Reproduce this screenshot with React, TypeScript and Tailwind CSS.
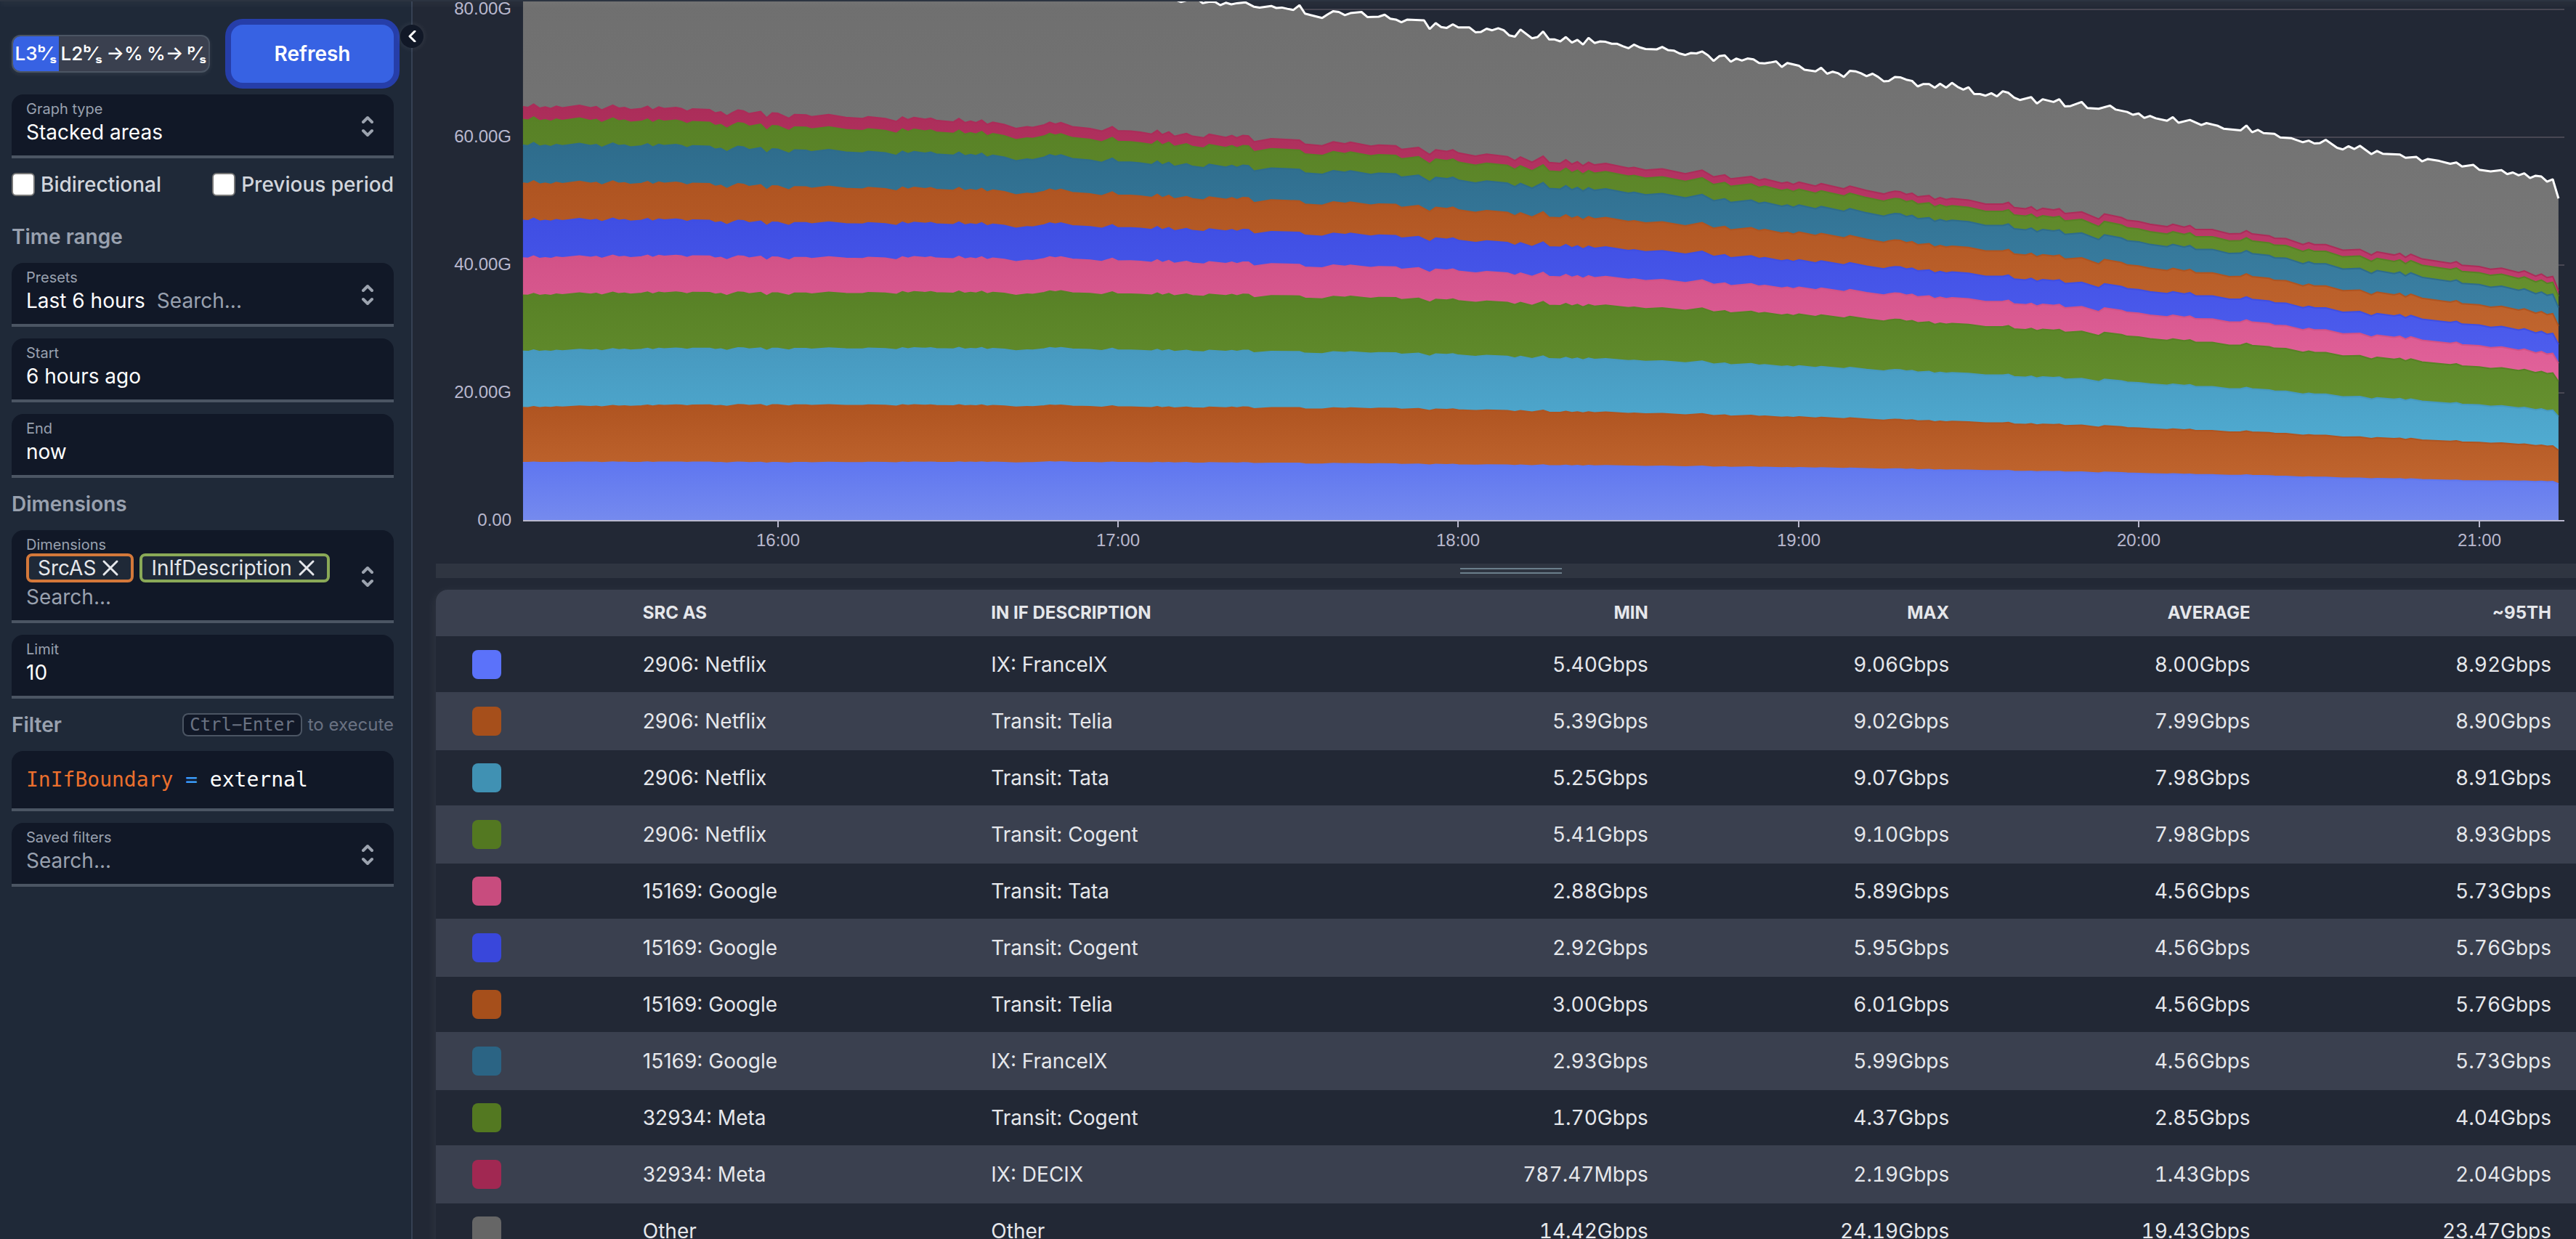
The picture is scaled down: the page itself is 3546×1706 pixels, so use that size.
import React, { useState } from "react";

type Pt = [number, number];

/* Plot geometry, in chart units */
const LEFT = 720;
const RIGHT = 3522;
const BASE = 716;

const scale = (pts: Pt[], ox: number, sx: number, sy: number): Pt[] =>
  pts.map(([x, y]) => [ox + x / sx, y / sy]);

const total: Pt[] = [
  [720, -60],
  [1500, -12],
  ...scale(
    [
      [0, -5],[30, 0],[40, 5],[55, 0],[80, 1],[87, 8],[102, 4],[114, 5],[125, 13],[137, 7],[149, 11],[161, 8],[180, 6],[198, 17],[210, 19],[235, 15],[246, 20],[258, 19],[270, 22],[283, 25],[296, 13],[308, 34],[320, 38],[345, 45],[357, 36],[369, 28],[381, 30],[394, 38],[406, 33],[430, 30],[443, 43],[467, 42],[480, 37],[492, 47],[504, 49],[516, 56],[529, 49],[565, 51],[577, 73],[590, 58],[602, 68],[614, 70],[627, 61],[639, 69],[663, 69],[676, 81],[688, 80],[700, 72],[712, 76],[725, 71],[737, 76],[749, 89],[761, 92],[773, 74],[798, 96],[810, 93],[822, 79],[835, 99],[847, 99],[859, 104],[871, 93],[884, 107],[896, 100],[908, 112],[920, 95],[933, 108],[945, 104],[957, 105],[970, 110],[982, 110],[994, 116],[1006, 121],[1018, 112],[1031, 119],[1043, 123],[1067, 124],[1079, 118],[1092, 126],[1104, 127],[1116, 134],[1129, 138],[1141, 133],[1153, 134],[1165, 129],[1178, 139],[1190, 153],[1202, 141],[1214, 139],[1227, 155],[1239, 147],[1251, 152],[1263, 147],[1276, 149],[1288, 158],[1300, 159],[1312, 157],[1325, 154],[1337, 168],[1349, 158],[1374, 165],[1386, 175],[1410, 179],[1422, 170],[1435, 185],[1447, 180],[1459, 184],[1471, 193],[1484, 178],[1496, 179],[1508, 184],[1520, 191],[1533, 185],[1545, 193],[1557, 204],
    ],
    1600, 1.568, 1.823,
  ),
  ...scale(
    [
      [0, 203],[14, 193],[26, 194],[40, 200],[53, 203],[66, 217],[79, 211],[92, 211],[105, 220],[117, 210],[131, 220],[144, 208],[157, 218],[170, 225],[182, 219],[195, 236],[208, 236],[221, 240],[234, 234],[247, 242],[260, 229],[273, 233],[286, 245],[299, 251],[325, 244],[338, 260],[351, 249],[376, 256],[389, 249],[402, 267],[415, 266],[440, 256],[453, 271],[479, 273],[505, 265],[518, 275],[544, 281],[557, 288],[570, 285],[583, 296],[596, 291],[609, 297],[635, 303],[648, 294],[661, 308],[687, 301],[713, 314],[725, 309],[751, 316],[764, 323],[803, 327],[816, 315],[829, 332],[842, 326],[855, 334],[880, 336],[893, 345],[919, 347],[945, 357],[958, 353],[971, 360],[984, 359],[997, 351],[1023, 371],[1036, 375],[1049, 367],[1062, 374],[1075, 366],[1101, 387],[1114, 379],[1127, 386],[1166, 388],[1179, 396],[1204, 394],[1217, 405],[1230, 399],[1256, 404],[1281, 411],[1295, 408],[1308, 418],[1334, 414],[1347, 426],[1373, 430],[1398, 427],[1411, 437],[1424, 433],[1437, 440],[1450, 435],[1463, 447],[1476, 441],[1489, 443],[1502, 456],[1515, 450],[1528, 498],
    ],
    2600, 1.6575, 1.823,
  ),
];

const named: Pt[] = [
  ...scale(
    [
      [188, 288],[199, 290],[211, 281],[224, 292],[236, 289],[248, 293],[260, 287],[273, 291],[310, 284],[334, 291],[346, 288],[358, 297],[382, 284],[395, 292],[407, 290],[420, 296],[444, 293],[457, 287],[468, 297],[481, 289],[493, 293],[518, 290],[530, 293],[542, 300],[554, 294],[591, 296],[603, 305],[615, 302],[628, 313],[640, 304],[652, 297],[664, 299],[676, 307],[701, 301],[714, 318],[726, 305],[738, 306],[762, 319],[774, 309],[799, 310],[811, 315],[848, 309],[885, 317],[921, 320],[933, 315],[970, 320],[994, 328],[1007, 316],[1019, 323],[1032, 317],[1056, 322],[1068, 319],[1080, 325],[1117, 329],[1129, 320],[1142, 331],[1154, 327],[1166, 331],[1178, 324],[1190, 336],[1202, 330],[1227, 336],[1252, 347],[1276, 342],[1288, 344],[1313, 337],[1325, 330],[1337, 335],[1349, 331],[1374, 342],[1412, 347],[1437, 354],[1460, 342],[1472, 353],[1500, 354],[1521, 357],[1545, 362],[1557, 352],
    ],
    600, 1.568, 1.96,
  ),
  ...scale(
    [
      [0, 338],[14, 331],[26, 342],[52, 335],[65, 342],[89, 346],[101, 337],[137, 345],[150, 340],[161, 346],[174, 340],[186, 341],[198, 356],[235, 348],[296, 352],[308, 362],[345, 366],[369, 356],[394, 361],[406, 357],[450, 367],[467, 364],[504, 366],[516, 375],[553, 370],[577, 388],[590, 376],[614, 380],[627, 376],[639, 384],[676, 392],[700, 387],[745, 393],[761, 403],[773, 394],[798, 407],[822, 392],[835, 408],[859, 410],[871, 401],[884, 412],[896, 406],[908, 416],[920, 407],[933, 414],[957, 410],[1006, 422],[1018, 420],[1043, 427],[1079, 424],[1129, 436],[1165, 427],[1190, 444],[1214, 439],[1227, 449],[1271, 443],[1288, 452],[1300, 449],[1337, 460],[1349, 457],[1362, 463],[1374, 457],[1410, 467],[1422, 461],[1471, 474],[1484, 467],[1520, 478],[1557, 487],
    ],
    1600, 1.568, 1.823,
  ),
  ...scale(
    [
      [0, 483],[14, 480],[26, 481],[40, 488],[53, 485],[66, 494],[92, 491],[105, 501],[117, 496],[131, 501],[144, 498],[182, 502],[221, 512],[260, 512],[273, 508],[286, 521],[312, 524],[325, 519],[338, 529],[351, 523],[376, 527],[389, 524],[402, 536],[440, 532],[479, 550],[492, 537],[531, 546],[544, 553],[570, 556],[596, 563],[635, 569],[648, 563],[674, 570],[687, 566],[700, 576],[738, 576],[777, 587],[803, 586],[816, 579],[829, 587],[868, 592],[880, 598],[906, 599],[945, 614],[958, 609],[971, 614],[997, 614],[1036, 628],[1075, 626],[1101, 640],[1114, 632],[1153, 640],[1166, 636],[1179, 646],[1191, 638],[1217, 650],[1281, 661],[1295, 657],[1308, 666],[1347, 669],[1373, 676],[1398, 673],[1437, 684],[1450, 680],[1476, 693],[1489, 688],[1502, 697],[1515, 694],[1528, 730],
    ],
    2600, 1.6575, 1.823,
  ),
];

/* Share of the named traffic below the top of each layer, at a few instants */
const shareX = [720, 1071, 1600, 2007, 2477, 2944, 3413, 3522];
const shares: number[][] = [
  [0.139, 0.141, 0.148, 0.15, 0.155, 0.156, 0.154, 0.158],
  [0.272, 0.283, 0.291, 0.3, 0.305, 0.308, 0.306, 0.304],
  [0.408, 0.422, 0.438, 0.449, 0.456, 0.46, 0.454, 0.451],
  [0.544, 0.558, 0.583, 0.597, 0.609, 0.613, 0.604, 0.604],
  [0.634, 0.646, 0.668, 0.678, 0.689, 0.693, 0.688, 0.684],
  [0.725, 0.732, 0.753, 0.762, 0.77, 0.772, 0.769, 0.766],
  [0.815, 0.821, 0.836, 0.845, 0.852, 0.851, 0.849, 0.847],
  [0.907, 0.912, 0.921, 0.926, 0.932, 0.932, 0.929, 0.927],
  [0.969, 0.969, 0.973, 0.975, 0.979, 0.975, 0.976, 0.976],
];

const interpolate = (xs: number[], ys: number[], x: number) => {
  let i = 1;
  while (i < xs.length - 1 && xs[i] < x) i++;
  const t = Math.min(1, Math.max(0, (x - xs[i - 1]) / (xs[i] - xs[i - 1])));
  return ys[i - 1] + (ys[i] - ys[i - 1]) * t;
};

const layers: Pt[][] = [
  ...shares.map((row) =>
    named.map(([x, y]): Pt => [x, BASE - (BASE - y) * interpolate(shareX, row, x)]),
  ),
  named,
  total,
];

const gradients: [string, string][] = [
  ["#5f76f0", "#758aee"],
  ["#af5421", "#c1662f"],
  ["#4799bf", "#50acd2"],
  ["#588126", "#66912f"],
  ["#d25287", "#e2629b"],
  ["#3f4ee3", "#4e5eee"],
  ["#af5421", "#c1662f"],
  ["#2e6c8c", "#3c82a6"],
  ["#588126", "#66912f"],
  ["#ab2d59", "#c03e70"],
  ["#6e6e6e", "#787878"],
];

const points = (p: Pt[]) => p.map(([x, y]) => `${x.toFixed(1)},${y.toFixed(1)}`).join(" ");

const hours: [string, number][] = [
  ["16:00", 1071], ["17:00", 1539], ["18:00", 2007], ["19:00", 2476], ["20:00", 2944], ["21:00", 3413],
];
const levels: [string, number][] = [
  ["80.00G", 12], ["60.00G", 188], ["40.00G", 364], ["20.00G", 540], ["0.00", 716],
];

function Chart() {
  return (
    <svg
      viewBox="600 0 2960 776"
      preserveAspectRatio="none"
      className="block h-[776px] w-full font-['Liberation_Sans',sans-serif] text-2xl"
      role="img"
      aria-label="Traffic, stacked areas"
    >
      <defs>
        {gradients.map(([a, b], i) => (
          <linearGradient key={i} id={`area${i}`} x1="0" y1="0" x2="0" y2="1">
            <stop offset="0" stopColor={a} />
            <stop offset="1" stopColor={b} />
          </linearGradient>
        ))}
      </defs>
      {levels.slice(0, 4).map(([label, y]) => (
        <line key={label} x1={LEFT} x2="3530" y1={y + 1} y2={y + 1} stroke="#484753" strokeWidth="2" />
      ))}
      {layers.map((top, i) => {
        const below = i ? layers[i - 1] : ([[LEFT, BASE], [RIGHT, BASE]] as Pt[]);
        return (
          <polygon key={i} points={points([...top, ...[...below].reverse()])} fill={`url(#area${i})`} />
        );
      })}
      {layers.slice(0, 10).map((top, i) => (
        <polyline key={i} points={points(top)} fill="none" stroke={gradients[i][0]} strokeWidth="2" />
      ))}
      <polyline points={points(total)} fill="none" stroke="#fff" strokeWidth="3" strokeLinejoin="bevel" />
      <line x1={LEFT} x2="3530" y1="717" y2="717" stroke="#b9b8ce" strokeWidth="2" />
      {hours.map(([label, x]) => (
        <g key={label}>
          <line x1={x} x2={x} y1="717" y2="726" stroke="#b9b8ce" strokeWidth="2" />
          <text x={x} y="752" textAnchor="middle" fill="#b9b8ce">{label}</text>
        </g>
      ))}
      {levels.map(([label, y]) => (
        <text key={label} x="704" y={y + 8} textAnchor="end" fill="#b9b8ce">{label}</text>
      ))}
    </svg>
  );
}

const rows: [string, string, string, string, string, string, string][] = [
  ["bg-[#5b72fa]", "2906: Netflix", "IX: FranceIX", "5.40Gbps", "9.06Gbps", "8.00Gbps", "8.92Gbps"],
  ["bg-[#a64f1b]", "2906: Netflix", "Transit: Telia", "5.39Gbps", "9.02Gbps", "7.99Gbps", "8.90Gbps"],
  ["bg-[#4091b3]", "2906: Netflix", "Transit: Tata", "5.25Gbps", "9.07Gbps", "7.98Gbps", "8.91Gbps"],
  ["bg-[#537821]", "2906: Netflix", "Transit: Cogent", "5.41Gbps", "9.10Gbps", "7.98Gbps", "8.93Gbps"],
  ["bg-[#c84c7e]", "15169: Google", "Transit: Tata", "2.88Gbps", "5.89Gbps", "4.56Gbps", "5.73Gbps"],
  ["bg-[#3947db]", "15169: Google", "Transit: Cogent", "2.92Gbps", "5.95Gbps", "4.56Gbps", "5.76Gbps"],
  ["bg-[#a64f1b]", "15169: Google", "Transit: Telia", "3.00Gbps", "6.01Gbps", "4.56Gbps", "5.76Gbps"],
  ["bg-[#2b6484]", "15169: Google", "IX: FranceIX", "2.93Gbps", "5.99Gbps", "4.56Gbps", "5.73Gbps"],
  ["bg-[#537821]", "32934: Meta", "Transit: Cogent", "1.70Gbps", "4.37Gbps", "2.85Gbps", "4.04Gbps"],
  ["bg-[#a12852]", "32934: Meta", "IX: DECIX", "787.47Mbps", "2.19Gbps", "1.43Gbps", "2.04Gbps"],
  ["bg-[#666666]", "Other", "Other", "14.42Gbps", "24.19Gbps", "19.43Gbps", "23.47Gbps"],
];

function DataTable() {
  return (
    <div className="overflow-hidden rounded-t-2xl shadow-[0_4px_16px_rgba(255,255,255,0.08)]">
      <table className="w-full table-fixed text-[28px] leading-10 text-gray-200">
        <thead className="bg-[#3a404f] text-2xl leading-8">
          <tr className="h-16">
            <th className="w-[8%]" aria-label="Colour" />
            <th className="w-[16.2%] px-12 text-left font-bold">SRC AS</th>
            <th className="px-12 text-left font-bold">IN IF DESCRIPTION</th>
            <th className="w-[14%] px-12 text-right font-bold">MIN</th>
            <th className="w-[14%] px-12 text-right font-bold">MAX</th>
            <th className="w-[14%] px-12 text-right font-bold">AVERAGE</th>
            <th className="w-[14%] px-12 text-right font-bold">~95TH</th>
          </tr>
        </thead>
        <tbody>
          {rows.map(([color, as, desc, ...values], i) => (
            <tr key={i} className="h-[78px] border-b-2 border-[#3a404f] bg-[#222835] even:bg-[#3a404f]">
              <td className="pl-[50px]">
                <div className={`size-10 rounded-lg ${color}`} />
              </td>
              <td className="px-12 whitespace-nowrap">{as}</td>
              <td className="px-12 whitespace-nowrap">{desc}</td>
              {values.map((v, j) => (
                <td key={j} className="px-12 text-right tabular-nums">{v}</td>
              ))}
            </tr>
          ))}
        </tbody>
      </table>
    </div>
  );
}

const box = "relative flex flex-col rounded-t-2xl border-b-4 border-[#4b5563] bg-[#111827] px-5";
const label = "text-xl leading-6 text-gray-400";

function Chevrons() {
  return (
    <svg viewBox="0 0 20 32" className="absolute top-1/2 right-[26px] h-8 w-5 -translate-y-3.5" fill="none" stroke="#9ca3af" strokeWidth="4" strokeLinecap="round" strokeLinejoin="round" aria-hidden="true">
      <path d="M4 10l6-6 6 6M4 22l6 6 6-6" />
    </svg>
  );
}

function Field({ id, name, value, search, list }: { id: string; name: string; value?: string; search?: boolean; list?: boolean }) {
  const [text, setText] = useState(value ?? "");
  return (
    <div className={`${box} h-[88px] pt-2`}>
      <label htmlFor={id} className={label}>{name}</label>
      {search ? (
        <div className="flex h-10 items-center gap-4 text-[28px] leading-10">
          {value && <span className="whitespace-nowrap text-white">{value}</span>}
          <input id={id} placeholder="Search..." className="w-60 bg-transparent text-white outline-none placeholder:text-gray-400" />
        </div>
      ) : list ? (
        <button id={id} type="button" className="h-10 text-left text-[28px] leading-10 text-white">{value}</button>
      ) : (
        <input id={id} value={text} onChange={(e) => setText(e.target.value)} className="h-10 bg-transparent text-[28px] leading-10 text-white outline-none" />
      )}
      {list && <Chevrons />}
    </div>
  );
}

function Tag({ name, border }: { name: string; border: string }) {
  return (
    <span className={`flex h-10 items-center gap-2 rounded-lg border-4 bg-[#1f2937] px-3 text-[28px] leading-8 text-gray-200 ${border}`}>
      {name}
      <button type="button" aria-label={`Remove ${name}`} className="pr-1">
        <svg viewBox="0 0 24 24" className="size-6" fill="none" stroke="currentColor" strokeWidth="3" strokeLinecap="round" aria-hidden="true">
          <path d="M3 3l18 18M21 3L3 21" />
        </svg>
      </button>
    </span>
  );
}

const units = ["L3ᵇ⁄ₛ", "L2ᵇ⁄ₛ", "→%", "%→", "ᵖ⁄ₛ"];

function Sidebar() {
  const [unit, setUnit] = useState(0);
  return (
    <aside className="relative w-[568px] shrink-0 border-r-2 border-[#364153] bg-[#1f2938] px-4 pt-[34px] pr-6">
      <button type="button" aria-label="Collapse" className="absolute top-[34px] -right-[17px] z-10 flex size-8 items-center justify-center rounded-full bg-[#111827] shadow-[0_0_8px_rgba(255,255,255,0.1)]">
        <svg viewBox="0 0 16 16" className="size-4" fill="none" stroke="#fff" strokeWidth="3" strokeLinecap="round" strokeLinejoin="round" aria-hidden="true">
          <path d="M12 1L5 8l7 7" />
        </svg>
      </button>
      <div className="flex items-center justify-between">
        <div className="flex h-[52px] w-[273px] overflow-hidden rounded-xl border-2 border-[#4b5563] bg-[#3a404f] shadow-[0_2px_6px_rgba(255,255,255,0.08)]" role="group" aria-label="Units">
          {units.map((u, i) => (
            <button
              key={u}
              type="button"
              onClick={() => setUnit(i)}
              aria-pressed={unit === i}
              className={`grow whitespace-nowrap text-center text-[26px] leading-10 font-medium text-white ${unit === i ? "bg-[#3762e3]" : ""}`}
            >
              {u}
            </button>
          ))}
        </div>
        <button type="button" className="h-20 w-56 rounded-2xl bg-[#3762e3] text-[28px] leading-10 font-semibold text-white ring-8 ring-[#263ea9]">
          Refresh
        </button>
      </div>
      <div className="mt-4">
        <Field id="graph" name="Graph type" value="Stacked areas" list />
      </div>
      <div className="mt-4 flex h-10 items-center justify-between text-[28px] leading-10 font-medium text-gray-300">
        {["Bidirectional", "Previous period"].map((name) => (
          <label key={name} className="flex items-center gap-2">
            <input type="checkbox" className="size-8 appearance-none rounded-md border-2 border-[#767676] bg-white checked:bg-blue-600" />
            {name}
          </label>
        ))}
      </div>
      <h2 className="mt-8 text-[28px] leading-10 font-semibold text-gray-400">Time range</h2>
      <div className="mt-4 flex flex-col gap-4">
        <Field id="presets" name="Presets" value="Last 6 hours" search list />
        <Field id="start" name="Start" value="6 hours ago" />
        <Field id="end" name="End" value="now" />
      </div>
      <h2 className="mt-4 text-[28px] leading-10 font-semibold text-gray-400">Dimensions</h2>
      <div className="mt-4 flex flex-col gap-4">
        <div className={`${box} h-32 pt-2`}>
          <label htmlFor="dims" className={label}>Dimensions</label>
          <div className="flex gap-2">
            <Tag name="SrcAS" border="border-[#d4783a]" />
            <Tag name="InIfDescription" border="border-[#8aa957]" />
          </div>
          <input id="dims" placeholder="Search..." className="h-10 w-60 bg-transparent text-[28px] leading-10 text-white outline-none placeholder:text-gray-400" />
          <Chevrons />
        </div>
        <Field id="limit" name="Limit" value="10" />
      </div>
      <div className="mt-4 flex h-10 items-center justify-between">
        <h2 className="text-[28px] leading-10 font-semibold text-gray-400">Filter</h2>
        <p className="flex items-center gap-2 text-2xl leading-8 text-gray-500">
          <kbd className="h-8 rounded-lg border-2 border-[#4b5563] bg-[#111827] px-2 font-['DejaVu_Sans_Mono',monospace] leading-7">Ctrl−Enter</kbd>
          to execute
        </p>
      </div>
      <div className="mt-4 flex flex-col gap-4">
        <div
          className={`${box} h-[83px] justify-center font-['DejaVu_Sans_Mono',monospace] text-[28px] leading-10 text-white outline-none`}
          contentEditable
          suppressContentEditableWarning
          role="textbox"
          aria-label="Filter expression"
        >
          <p>
            <span className="text-[#eb6f2d]">InIfBoundary</span> <span className="text-[#3a9bf8]">=</span> external
          </p>
        </div>
        <Field id="saved" name="Saved filters" search list />
      </div>
    </aside>
  );
}

export default function App() {
  return (
    <div className="relative flex h-screen overflow-hidden bg-[#222835] font-['Inter',sans-serif]">
      <div className="pointer-events-none absolute inset-x-0 top-0 z-20 h-0.5 bg-[#2c3441] shadow-[0_2px_8px_rgba(255,255,255,0.15)]" />
      <Sidebar />
      <main className="-mr-3.5 min-w-0 grow pl-8">
        <Chart />
        <div className="flex h-5 flex-col items-center justify-center gap-1 bg-[#2f3541]" role="separator">
          <div className="h-0.5 w-[140px] bg-[#6b7f8c]" />
          <div className="h-0.5 w-[140px] bg-[#6b7f8c]" />
        </div>
        <div className="pt-4">
          <DataTable />
        </div>
      </main>
    </div>
  );
}
